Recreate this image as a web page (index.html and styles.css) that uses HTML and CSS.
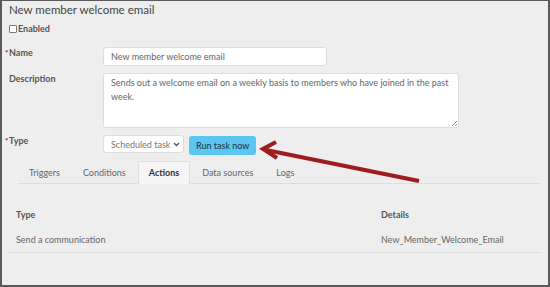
FILE: index.html
```html
<!DOCTYPE html>
<html lang="en">
<head>
    <meta charset="UTF-8">
    <title>New member welcome email</title>
    <link rel="stylesheet" href="styles.css">
</head>
<body>
    <div class="frame">
        <h1 class="title">New member welcome email</h1>

        <label class="check"><span class="box"></span>Enabled</label>

        <div class="form">
            <label class="lbl req">Name</label>
            <div class="field">
                <div class="input name-input">New member welcome email</div>
            </div>

            <label class="lbl">Description</label>
            <div class="field">
                <div class="input textarea">Sends out a welcome email on a weekly basis to members who have joined in the past week.<span class="grip"></span></div>
            </div>

            <label class="lbl req type-lbl">Type</label>
            <div class="field inline">
                <div class="select">Scheduled task
                    <svg class="chev" width="7" height="5" viewBox="0 0 7 5"><path d="M1 1l2.5 2.5L6 1" fill="none" stroke="#555" stroke-width="1.4"/></svg>
                </div>
                <button class="run-btn">Run task now</button>
            </div>
        </div>

        <ul class="tabs">
            <li>Triggers</li>
            <li>Conditions</li>
            <li class="active">Actions</li>
            <li>Data sources</li>
            <li>Logs</li>
        </ul>

        <table class="grid">
            <thead>
                <tr><th>Type</th><th class="col-details">Details</th></tr>
            </thead>
            <tbody>
                <tr><td>Send a communication</td><td class="col-details">New_Member_Welcome_Email</td></tr>
            </tbody>
        </table>

        <!-- annotation arrow pointing at the run button -->
        <svg class="arrow" width="550" height="287" viewBox="0 0 550 287">
            <g stroke="#9e1b20" stroke-width="4" stroke-linecap="butt" fill="none">
                <line x1="419" y1="181" x2="266" y2="150"/>
                <polyline points="276,142 263,149 277,158" stroke-linejoin="miter"/>
            </g>
        </svg>
    </div>
</body>
</html>
```

FILE: styles.css
```css
html, body {
    margin: 0;
    padding: 0;
}
body {
    font-family: Lato, 'Open Sans', Arial, sans-serif;
    font-size: 9px;
    color: #555;
    background-color: #eee;
}
.frame {
    position: relative;
    width: 550px;
    height: 287px;
    box-sizing: border-box;
    border: 2px solid #5a5a5a;
    border-top-width: 1px;
    background-color: #eee;
    padding: 0 7px;
    overflow: hidden;
}
.title {
    margin: 0;
    font-size: 11.5px;
    font-weight: normal;
    color: #444;
    line-height: 18px;
}
.check {
    display: flex;
    align-items: center;
    margin-top: 3px;
    font-weight: bold;
    color: #555;
    line-height: 14px;
}
.check .box {
    width: 6px;
    height: 6px;
    border: 1px solid #777;
    border-radius: 1px;
    background-color: #fff;
    margin-right: 1px;
}
.form {
    display: grid;
    grid-template-columns: 94px auto;
    row-gap: 7px;
    margin-top: 11px;
}
.lbl {
    position: relative;
    font-weight: bold;
    color: #555;
    line-height: 14px;
    margin-top: -1px;
}
.type-lbl {
    margin-top: -1px;
}
.req::before {
    content: '*';
    position: absolute;
    left: -4px;
    top: 0;
    color: #d0021b;
    font-size: 8px;
}
.field {
    display: flex;
}
.field.inline {
    align-items: flex-start;
    gap: 5px;
}
.input {
    box-sizing: border-box;
    background-color: #fff;
    border: 1px solid #ddd;
    border-radius: 3px;
    color: #666;
    padding: 0 7px;
}
.name-input {
    width: 224px;
    height: 19px;
    line-height: 17px;
}
.textarea {
    position: relative;
    width: 356px;
    height: 55px;
    line-height: 14px;
    padding-top: 2px;
}
.grip {
    position: absolute;
    right: 1px;
    bottom: 1px;
    width: 5px;
    height: 5px;
    background: linear-gradient(135deg, transparent 45%, #999 45%, #999 55%, transparent 55%, transparent 70%, #999 70%, #999 80%, transparent 80%);
}
.select {
    box-sizing: border-box;
    display: flex;
    align-items: center;
    justify-content: space-between;
    width: 81px;
    height: 18px;
    padding: 0 3px 0 7px;
    background-color: #fff;
    border: 1px solid #ddd;
    border-radius: 3px;
    color: #777;
    white-space: nowrap;
}
.chev {
    margin-left: 3px;
    flex-shrink: 0;
}
.run-btn {
    height: 19px;
    margin-top: 1px;
    padding: 0 7px;
    border: none;
    border-radius: 3px;
    background-color: #5cc6f2;
    color: #1e2f3a;
    font-family: inherit;
    font-size: inherit;
}
.tabs {
    display: flex;
    list-style: none;
    margin: 6px 0 0 9px;
    padding: 0;
    border-bottom: 1px solid #ddd;
}
.tabs li {
    padding: 0 10px;
    margin-right: 1px;
    line-height: 21px;
    color: #666;
    border: 1px solid transparent;
    border-bottom: none;
}
.tabs li.active {
    background-color: #f5f5f5;
    border-color: #ddd;
    border-radius: 2px 2px 0 0;
    font-weight: bold;
    color: #333;
    margin-bottom: -1px;
    padding-bottom: 1px;
}
.grid {
    width: 100%;
    border-collapse: collapse;
    margin-top: 22px;
}
.grid th, .grid td {
    text-align: left;
    padding: 0 7px;
    color: #666;
}
.grid th {
    font-weight: bold;
    line-height: 17px;
    color: #555;
}
.grid td {
    line-height: 14px;
    padding-top: 10px;
    padding-bottom: 5px;
    border-bottom: 1px solid #ddd;
}
.grid .col-details {
    width: 153px;
}
.arrow {
    position: absolute;
    left: -2px;
    top: -1px;
    pointer-events: none;
}
```
